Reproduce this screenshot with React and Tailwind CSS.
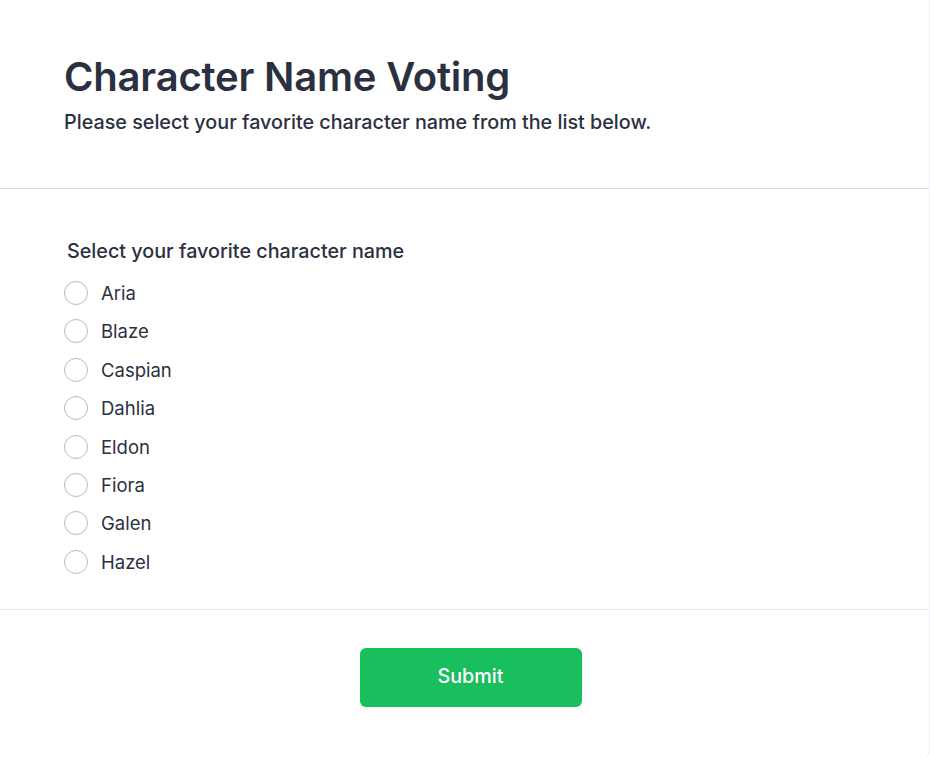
import { useState } from "react";

const names = ["Aria", "Blaze", "Caspian", "Dahlia", "Eldon", "Fiora", "Galen", "Hazel"];

export default function App() {
  const [choice, setChoice] = useState("");

  return (
    <div className="min-h-[757px] bg-white font-['Inter',sans-serif] text-[#2b3040]">
      <div className="w-[930px] border-r border-b border-[#f3f4f7] rounded-br-md bg-white">
        {/* Header */}
        <div className="px-16 pt-[53px] pb-[52px] border-b border-[#dcdce8]">
          <h1 className="text-[40px] leading-[48px] font-semibold tracking-[-0.2px]">Character Name Voting</h1>
          <p className="mt-[7px] text-[19.75px] leading-[28px] font-medium">
            Please select your favorite character name from the list below.
          </p>
        </div>

        {/* Options */}
        <div className="px-16 pt-[48px] pb-[33px] border-b border-[#e6e8f2]">
          <p className="pl-[3px] text-[19.75px] leading-[28px] font-medium">Select your favorite character name</p>
          <div className="mt-[14px] flex flex-col gap-[10.4px]">
            {names.map((n) => (
              <label key={n} className="flex items-center h-[28px] cursor-pointer">
                <input
                  type="radio"
                  name="character"
                  value={n}
                  checked={choice === n}
                  onChange={() => setChoice(n)}
                  className="sr-only"
                />
                <span
                  className={
                    "w-6 h-6 rounded-full border bg-white flex items-center justify-center " +
                    (choice === n ? "border-[#19be5d]" : "border-[#b5b9c9]")
                  }
                >
                  {choice === n && <span className="w-3 h-3 rounded-full bg-[#19be5d]" />}
                </span>
                <span className="ml-[13px] text-[18.5px] leading-[28px]">{n}</span>
              </label>
            ))}
          </div>
        </div>

        {/* Submit */}
        <div className="flex justify-center pt-[38px] pb-[50px]">
          <button
            type="button"
            className="ml-[12px] w-[222px] h-[59px] rounded-md bg-[#19be5d] text-white text-[19.75px] font-medium"
          >
            Submit
          </button>
        </div>
      </div>
    </div>
  );
}
